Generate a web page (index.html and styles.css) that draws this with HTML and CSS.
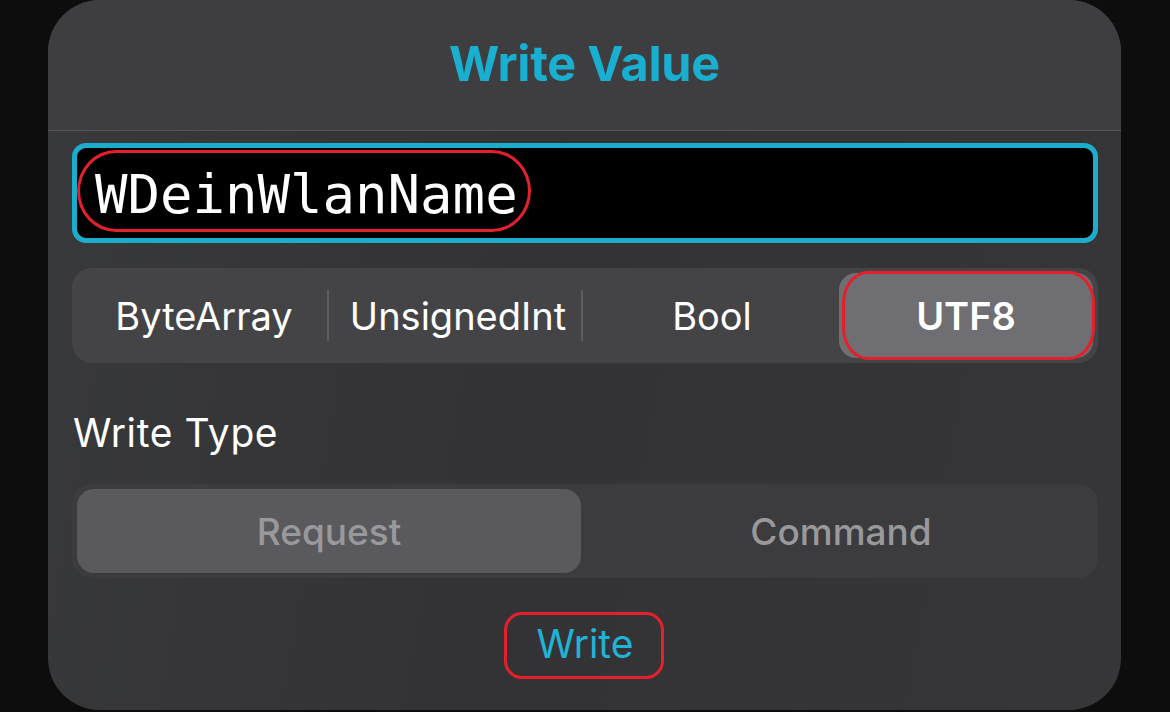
FILE: index.html
```html
<!DOCTYPE html>
<html lang="en">
<head>
  <meta charset="UTF-8">
  <title>Write Value</title>
  <link rel="stylesheet" href="styles.css">
</head>
<body>

  <div id="sheet">
    <div class="sheet-header">
      <h1>Write Value</h1>
    </div>

    <div class="sheet-body">
      <div class="value-field">
        <span class="value-text">WDeinWlanName</span>
        <span class="mark mark-value"></span>
      </div>

      <div class="segmented format-picker">
        <div class="segment">ByteArray</div>
        <div class="segment divided">UnsignedInt</div>
        <div class="segment divided">Bool</div>
        <div class="segment selected">UTF8<span class="mark mark-utf8"></span></div>
      </div>

      <div class="section-label">Write Type</div>

      <div class="segmented type-picker">
        <div class="segment selected">Request</div>
        <div class="segment">Command</div>
      </div>

      <div class="write-row">
        <button id="write-button">Write<span class="mark mark-write"></span></button>
      </div>
    </div>
  </div>

</body>
</html>
```

FILE: styles.css
```css
body {
  margin: 0;
  width: 1170px;
  height: 712px;
  overflow: hidden;
  background-color: #0d0d0d;
  font-family: Inter, "Liberation Sans", sans-serif;
  color: white;
}

#sheet {
  margin-left: 48px;
  width: 1073px;
  height: 710px;
  border-radius: 52px;
  overflow: hidden;
  background: linear-gradient(100deg, #38393b 0%, #333335 45%, #363638 100%);
}

.sheet-header {
  height: 130px;
  background-color: #3e3e40;
  border-bottom: 1px solid #555557;
  display: flex;
  justify-content: center;
  align-items: center;
}

.sheet-header h1 {
  margin: 0 0 4px;
  font-size: 48.5px;
  font-weight: 700;
  color: #19afd1;
  letter-spacing: -0.2px;
}

.sheet-body {
  padding: 12px 23px 0 24px;
}

.value-field {
  position: relative;
  height: 90px;
  border: 5px solid #1cadcd;
  border-radius: 14px;
  background-color: black;
  display: flex;
  align-items: center;
  padding-left: 18px;
}

.value-text {
  font-family: "DejaVu Sans Mono", monospace;
  font-size: 54px;
  margin-top: 2px;
}

/* red hand-drawn rings */
.mark {
  position: absolute;
  border: 3px solid #e3202c;
  pointer-events: none;
}

.mark-value {
  left: 0;
  top: 2px;
  width: 448px;
  height: 76px;
  border-radius: 40px / 42px;
}

.mark-utf8 {
  left: 3px;
  top: -2px;
  right: -2px;
  bottom: -2px;
  border-radius: 26px / 32px;
}

.mark-write {
  left: -33px;
  top: -8px;
  right: -31px;
  bottom: -12px;
  border-radius: 18px;
}

.segmented {
  display: flex;
  padding: 5px;
  border-radius: 20px;
}

.segment {
  flex: 1;
  position: relative;
  display: flex;
  justify-content: center;
  align-items: center;
  border-radius: 17px;
}

.format-picker {
  margin-top: 25px;
  height: 85px;
  background-color: #444447;
}

.format-picker .segment {
  font-size: 38px;
  font-weight: 400;
}

.format-picker .divided::before {
  content: "";
  position: absolute;
  left: -4px;
  top: 17px;
  bottom: 17px;
  width: 2px;
  background-color: #5c5c5f;
}

.format-picker .selected {
  background-color: #6f6e73;
  font-weight: 600;
}

.section-label {
  margin: 42px 0 0 1px;
  font-size: 39px;
  letter-spacing: 0.6px;
  line-height: 55px;
}

.type-picker {
  margin-top: 24px;
  height: 84px;
  background-color: #3c3c3f;
}

.type-picker .segment {
  font-size: 37px;
  font-weight: 500;
  color: #99999c;
}

.type-picker .selected {
  background-color: #5a5a5e;
  margin-right: 8px;
}

.write-row {
  display: flex;
  justify-content: center;
  margin-top: 42px;
}

#write-button {
  position: relative;
  background: none;
  border: none;
  padding: 0;
  font-family: inherit;
  font-size: 39px;
  color: #1fb3d5;
  cursor: pointer;
}
```
